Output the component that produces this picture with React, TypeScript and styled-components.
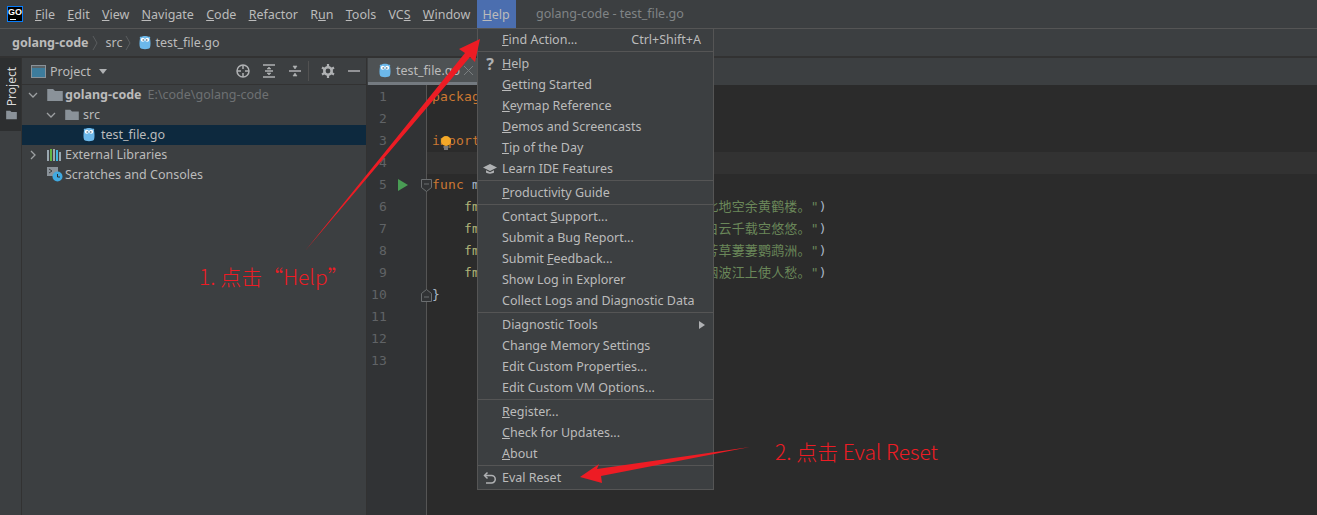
import React from "react";
import styled, { createGlobalStyle } from "styled-components";

const UI_FONT = `"Noto Sans", "Noto Sans CJK SC", sans-serif`;
const MONO_FONT = `"DejaVu Sans Mono", "Noto Sans CJK SC", monospace`;

const GlobalStyle = createGlobalStyle`
  html, body {
    margin: 0;
    padding: 0;
    background: #3c3f41;
  }
  * {
    box-sizing: border-box;
  }
`;

const Page = styled.div`
  position: relative;
  width: 1317px;
  height: 515px;
  overflow: hidden;
  display: flex;
  flex-direction: column;
  background: #3c3f41;
  color: #bbbbbb;
  font-family: ${UI_FONT};
  font-size: 12.5px;
`;

const MenuBar = styled.div`
  height: 29px;
  flex: none;
  display: flex;
  align-items: stretch;
  padding-left: 7px;
  border-bottom: 1px solid #555555;
`;

const Logo = styled.div`
  width: 16px;
  height: 16px;
  margin: 6px 6px 0 0;
  flex: none;
  background: #000000;
  border: 1px solid #087cfa;
  color: #ffffff;
  font: bold 9px/10px "Liberation Sans", sans-serif;
  text-align: center;
  position: relative;
  &::after {
    content: "";
    position: absolute;
    left: 2px;
    bottom: 1px;
    width: 6px;
    height: 1px;
    background: #ffffff;
  }
`;

const MenuTitle = styled.div<{ $open?: boolean }>`
  height: 28px;
  padding: 0 6px;
  line-height: 29px;
  background: ${(p) => (p.$open ? "#4b6eaf" : "transparent")};
  margin-right: 0.25px;
`;

const WindowTitle = styled.div`
  margin-left: 20px;
  line-height: 27px;
  color: #808486;
`;

const Breadcrumb = styled.div`
  height: 29px;
  flex: none;
  display: flex;
  align-items: center;
  padding-left: 12px;
  border-bottom: 2px solid #323232;
`;

const CrumbStrong = styled.span`
  font-weight: bold;
`;

const CrumbArrow = styled.svg`
  width: 6px;
  height: 16px;
  margin: 0 8px 0 3px;
  fill: none;
  stroke: #5a5d5f;
`;

const CrumbIcon = styled.span`
  display: flex;
  margin-right: 4px;
`;

const Body = styled.div`
  flex: 1;
  display: flex;
  min-height: 0;
`;

const ToolStrip = styled.div`
  width: 22px;
  flex: none;
  border-right: 1px solid #323232;
`;

const ToolButton = styled.div`
  height: 73px;
  background: #2d2f30;
  display: flex;
  flex-direction: column;
  align-items: center;
  padding-top: 9px;
  gap: 4px;
  padding-left: 2px;
`;

const ToolLabel = styled.span`
  writing-mode: vertical-rl;
  transform: rotate(180deg);
  font-size: 12px;
  line-height: 14px;
  color: #d8d8d8;
`;

const ProjectPanel = styled.div`
  width: 345px;
  flex: none;
  border-right: 1px solid #323232;
`;

const PanelHeader = styled.div`
  height: 27px;
  display: flex;
  align-items: center;
  padding: 0 5px 0 9px;
  border-bottom: 1px solid #323232;
`;

const PanelTitle = styled.span`
  margin-left: 4px;
`;

const Dropdown = styled.span`
  margin-left: 8px;
  width: 0;
  height: 0;
  border-left: 4.5px solid transparent;
  border-right: 4.5px solid transparent;
  border-top: 5px solid #afb1b3;
`;

const PanelTools = styled.div`
  margin-left: auto;
  display: flex;
  align-items: center;
`;

const ToolIcon = styled.svg<{ $outline?: boolean }>`
  width: 14px;
  height: 14px;
  margin-left: 12px;
  fill: ${(p) => (p.$outline ? "none" : "#afb1b3")};
  stroke: #afb1b3;
  stroke-width: 1.5;
`;

const ToolDivider = styled.span`
  width: 1px;
  height: 20px;
  background: #515151;
  margin: 0 0 0 6px;
`;

const Tree = styled.div`
  display: flex;
  flex-direction: column;
`;

const TreeRow = styled.div<{ $depth: number; $selected?: boolean }>`
  height: 20px;
  display: flex;
  align-items: center;
  padding-left: ${(p) => 5 + p.$depth * 18}px;
  padding-bottom: 1px;
  background: ${(p) => (p.$selected ? "#0d293e" : "transparent")};
  white-space: nowrap;
`;

const ChevronSlot = styled.span`
  width: 12px;
  display: flex;
  justify-content: center;
  margin-right: 8px;
  flex: none;
`;

const IconSlot = styled.span`
  width: 18px;
  display: flex;
  flex: none;
`;

const TreeHint = styled.span`
  margin-left: 6px;
  color: #6e7173;
`;

const EditorPane = styled.div`
  flex: 1;
  display: flex;
  flex-direction: column;
  min-width: 0;
`;

const TabBar = styled.div`
  height: 27px;
  flex: none;
  display: flex;
  padding-left: 1px;
`;

const Tab = styled.div`
  width: 109px;
  display: flex;
  align-items: center;
  padding-left: 11px;
  background: #4e5254;
  border-bottom: 3px solid #747a80;
  gap: 5px;
  position: relative;
  padding-top: 1px;
  & > svg:first-child {
    flex: none;
  }
`;

const TabClose = styled.svg`
  position: absolute;
  right: 4px;
  top: 8px;
  width: 9px;
  height: 9px;
  stroke: #7a7e80;
  stroke-width: 1;
`;

const Editor = styled.div`
  flex: 1;
  display: flex;
  background: #2b2b2b;
  font-family: ${MONO_FONT};
  font-size: 13px;
  letter-spacing: 0.17px;
  line-height: 22px;
`;

const Gutter = styled.div`
  width: 60px;
  flex: none;
  background: #313335;
  border-right: 1px solid #555555;
  padding-top: 1px;
`;

const GutterRow = styled.div`
  position: relative;
  height: 22px;
  display: flex;
  align-items: center;
`;

const LineNumber = styled.span`
  width: 20px;
  text-align: right;
  color: #606366;
`;

const RunMark = styled.svg`
  margin-left: 11px;
  width: 10px;
  height: 12px;
  fill: #499c54;
`;

const FoldMark = styled.svg`
  position: absolute;
  right: -6px;
  top: 5px;
  width: 11px;
  height: 13px;
  fill: #313335;
  stroke: #6b6e70;
`;

const CodeArea = styled.div`
  flex: 1;
  position: relative;
  padding-top: 1px;
  min-width: 0;
`;

const CodeLine = styled.div<{ $current?: boolean }>`
  height: 22px;
  padding-left: 5px;
  white-space: pre;
  color: #a9b7c6;
  background: ${(p) => (p.$current ? "#323232" : "transparent")};
`;

const Keyword = styled.span`
  color: #cc7832;
`;

const Call = styled.span`
  color: #afb478;
`;

const StringText = styled.span`
  color: #6a8759;
`;

const Bulb = styled.svg`
  position: absolute;
  left: 12px;
  top: 50px;
  width: 14px;
  height: 16px;
`;

const ActionMenu = styled.div`
  position: absolute;
  left: 477px;
  top: 28px;
  width: 237px;
  height: 462px;
  padding-top: 1px;
  background: #3c3f41;
  border: 1px solid #555555;
`;

const MenuSection = styled.div`
  padding-top: 2px;
  border-bottom: 1px solid #555555;
  &:first-child {
    padding-top: 0;
  }
  &:last-child {
    border-bottom: none;
  }
`;

const MenuRow = styled.div`
  position: relative;
  height: 21px;
  display: flex;
  align-items: center;
  padding: 0 12px 2px 24px;
  color: #bbbbbb;
  white-space: nowrap;
`;

const MenuIcon = styled.span`
  position: absolute;
  left: 5px;
  top: 3px;
  width: 14px;
  height: 14px;
  display: flex;
  align-items: center;
  justify-content: center;
  color: #afb1b3;
  font-weight: bold;
  font-size: 16px;
`;

const Shortcut = styled.span`
  margin-left: auto;
`;

const SubArrow = styled.span`
  margin-left: auto;
  margin-right: -4px;
  width: 0;
  height: 0;
  border-top: 4px solid transparent;
  border-bottom: 4px solid transparent;
  border-left: 6px solid #afb1b3;
`;

const Arrows = styled.svg`
  position: absolute;
  left: 0;
  top: 0;
  width: 1317px;
  height: 515px;
  fill: #ed1c24;
  pointer-events: none;
`;

const Note = styled.div<{ $x: number; $y: number }>`
  position: absolute;
  left: ${(p) => p.$x}px;
  top: ${(p) => p.$y}px;
  color: #ed1c24;
  font-family: "Noto Sans CJK SC", "Noto Sans", sans-serif;
  font-size: 21px;
  font-weight: 300;
  line-height: 28px;
  white-space: pre;
`;

const Gopher = () => (
  <svg width="12" height="15" viewBox="0 0 12 15">
    <path d="M1 3.500A1.200 1.200 0 0 1 2.500 1.700C3.500.6 8.500.6 9.500 1.700A1.200 1.200 0 0 1 11 3.500c.7 3 .7 7 0 9-.5 2.300-9.500 2.300-10 0-.7-2-.7-6 0-9z" fill="#6cb8ea" />
    <circle cx="3.800" cy="4.800" r="2" fill="#ffffff" />
    <circle cx="8.200" cy="4.800" r="2" fill="#ffffff" />
    <circle cx="4.200" cy="5" r=".7" fill="#1f3f55" />
    <circle cx="7.800" cy="5" r=".7" fill="#1f3f55" />
  </svg>
);

const Folder = ({ size = 16 }: { size?: number }) => (
  <svg width={size} height={size * 0.85} viewBox="0 0 16 14">
    <path d="M0 1h6l2 2h8v11H0z" fill="#8a9299" />
  </svg>
);

const Chevron = ({ open }: { open?: boolean }) => (
  <svg width="10" height="10" viewBox="0 0 10 10" fill="none" stroke="#9da0a2" strokeWidth="1.300">
    <path d={open ? "M1 3l4 4 4-4" : "M3 1l4 4-4 4"} />
  </svg>
);

const Mnemonic = ({ label }: { label: string }) => {
  const at = label.indexOf("_");
  if (at < 0) return <span>{label}</span>;
  return (
    <span>
      {label.slice(0, at)}
      <u>{label[at + 1]}</u>
      {label.slice(at + 2)}
    </span>
  );
};

const menuBarItems = ["_File", "_Edit", "_View", "_Navigate", "_Code", "_Refactor", "R_un", "_Tools", "VC_S", "_Window"];

type MenuItem = {
  label: string;
  shortcut?: string;
  icon?: React.ReactNode;
  submenu?: boolean;
};

const CapIcon = () => (
  <svg width="14" height="12" viewBox="0 0 14 12" fill="#afb1b3">
    <path d="M7 1L0 4.500 7 8l7-3.500z" />
    <path d="M3 7.200V9.500c1.500 1.500 6.500 1.500 8 0V7.200L7 9.200z" />
  </svg>
);

const UndoIcon = () => (
  <svg width="14" height="14" viewBox="0 0 14 14" fill="none" stroke="#afb1b3" strokeWidth="1.500">
    <path d="M4.500 1.500L1.500 4.500l3 3" />
    <path d="M2 4.500h6.500a3.500 3.500 0 0 1 0 7.500H3" />
  </svg>
);

const menuSections: MenuItem[][] = [
  [{ label: "_Find Action...", shortcut: "Ctrl+Shift+A" }],
  [
    { label: "_Help", icon: "?" },
    { label: "_Getting Started" },
    { label: "_Keymap Reference" },
    { label: "_Demos and Screencasts" },
    { label: "_Tip of the Day" },
    { label: "Learn IDE Features", icon: <CapIcon /> },
  ],
  [{ label: "_Productivity Guide" }],
  [
    { label: "Contact _Support..." },
    { label: "Submit a Bug Report..." },
    { label: "Submit _Feedback..." },
    { label: "Show Log in Explorer" },
    { label: "Collect Logs and Diagnostic Data" },
  ],
  [
    { label: "Diagnostic Tools", submenu: true },
    { label: "Change Memory Settings" },
    { label: "Edit Custom Properties..." },
    { label: "Edit Custom VM Options..." },
  ],
  [{ label: "_Register..." }, { label: "_Check for Updates..." }, { label: "_About" }],
  [{ label: "Eval Reset", icon: <UndoIcon /> }],
];

const poem = [
  "昔人已乘黄鹤去，此地空余黄鹤楼。",
  "黄鹤一去不复返，白云千载空悠悠。",
  "晴川历历汉阳树，芳草萋萋鹦鹉洲。",
  "日暮乡关何处是，烟波江上使人愁。",
];

const App = () => {
  return (
    <Page>
      <GlobalStyle />
      <MenuBar>
        <Logo>GO</Logo>
        {menuBarItems.map((item) => (
          <MenuTitle key={item}>
            <Mnemonic label={item} />
          </MenuTitle>
        ))}
        <MenuTitle $open>
          <Mnemonic label="_Help" />
        </MenuTitle>
        <WindowTitle>golang-code - test_file.go</WindowTitle>
      </MenuBar>

      <Breadcrumb>
        <CrumbStrong>golang-code</CrumbStrong>
        <CrumbArrow viewBox="0 0 6 16">
          <path d="M1 1l4 7-4 7" />
        </CrumbArrow>
        <span>src</span>
        <CrumbArrow viewBox="0 0 6 16">
          <path d="M1 1l4 7-4 7" />
        </CrumbArrow>
        <CrumbIcon>
          <Gopher />
        </CrumbIcon>
        <span>test_file.go</span>
      </Breadcrumb>

      <Body>
        <ToolStrip>
          <ToolButton>
            <ToolLabel>Project</ToolLabel>
            <Folder size={11} />
          </ToolButton>
        </ToolStrip>

        <ProjectPanel>
          <PanelHeader>
            <svg width="15" height="13" viewBox="0 0 15 13">
              <rect x=".5" y=".5" width="14" height="12" fill="#3d7c9c" stroke="#8a9299" />
              <rect x="1" y="1" width="13" height="2" fill="#5a6266" />
            </svg>
            <PanelTitle>Project</PanelTitle>
            <Dropdown />
            <PanelTools>
              <ToolIcon viewBox="0 0 14 14" $outline>
                <circle cx="7" cy="7" r="6" />
                <path d="M7 1v4M7 9v4M1 7h4M9 7h4" />
              </ToolIcon>
              <ToolIcon viewBox="0 0 14 14">
                <path d="M1 1h12M1 13h12M3 7h8" />
                <path d="M7 3L5 5h4zM7 11L5 9h4z" strokeWidth="0.6" />
              </ToolIcon>
              <ToolIcon viewBox="0 0 14 14">
                <path d="M1 7h12" />
                <path d="M7 5L5 2h4zM7 9L5 12h4z" strokeWidth="0.6" />
              </ToolIcon>
              <ToolDivider />
              <ToolIcon viewBox="0 0 14 14" $outline>
                <circle cx="7" cy="7" r="3.700" strokeWidth="2.600" />
                <path d="M7 0v3M7 11v3M1 3.500l2.500 1.500M10.500 9l2.500 1.500M13 3.500L10.500 5M3.500 9L1 10.500" strokeWidth="2.200" />
              </ToolIcon>
              <ToolIcon viewBox="0 0 14 14">
                <path d="M1 7h12" />
              </ToolIcon>
            </PanelTools>
          </PanelHeader>
          <Tree>
            <TreeRow $depth={0}>
              <ChevronSlot>
                <Chevron open />
              </ChevronSlot>
              <IconSlot>
                <Folder />
              </IconSlot>
              <CrumbStrong>golang-code</CrumbStrong>
              <TreeHint>E:\code\golang-code</TreeHint>
            </TreeRow>
            <TreeRow $depth={1}>
              <ChevronSlot>
                <Chevron open />
              </ChevronSlot>
              <IconSlot>
                <Folder size={14} />
              </IconSlot>
              src
            </TreeRow>
            <TreeRow $depth={2} $selected>
              <ChevronSlot />
              <IconSlot>
                <Gopher />
              </IconSlot>
              test_file.go
            </TreeRow>
            <TreeRow $depth={0}>
              <ChevronSlot>
                <Chevron />
              </ChevronSlot>
              <IconSlot>
                <svg width="15" height="12" viewBox="0 0 15 12">
                  <rect x="0" y="1" width="2" height="11" fill="#9aa7b0" />
                  <rect x="3" y="0" width="2" height="12" fill="#62b543" />
                  <rect x="6" y="0" width="2" height="12" fill="#9aa7b0" />
                  <rect x="9" y="1" width="2" height="11" fill="#40b6e0" />
                  <rect x="12" y="3" width="2" height="9" fill="#9aa7b0" />
                </svg>
              </IconSlot>
              External Libraries
            </TreeRow>
            <TreeRow $depth={0}>
              <ChevronSlot />
              <IconSlot>
                <svg width="16" height="15" viewBox="0 0 16 15">
                  <rect x="0" y="0" width="11" height="9" fill="#8a9299" />
                  <path d="M2 2l3 2-3 2" fill="none" stroke="#3c3f41" />
                  <circle cx="10.500" cy="9.500" r="5" fill="#40a9e0" />
                  <path d="M10.500 7v3h2.500" fill="none" stroke="#2b2b2b" />
                </svg>
              </IconSlot>
              Scratches and Consoles
            </TreeRow>
          </Tree>
        </ProjectPanel>

        <EditorPane>
          <TabBar>
            <Tab>
              <Gopher />
              test_file.go
              <TabClose viewBox="0 0 9 9">
                <path d="M0 0l9 9M9 0L0 9" />
              </TabClose>
            </Tab>
          </TabBar>
          <Editor>
            <Gutter>
              {Array.from({ length: 13 }, (_, i) => i + 1).map((n) => (
                <GutterRow key={n}>
                  <LineNumber>{n}</LineNumber>
                  {n === 5 && (
                    <RunMark viewBox="0 0 10 12">
                      <path d="M0 0l10 6-10 6z" />
                    </RunMark>
                  )}
                  {n === 5 && (
                    <FoldMark viewBox="0 0 11 13">
                      <path d="M.5.5h10v8l-5 4-5-4zM3 5h5" />
                    </FoldMark>
                  )}
                  {n === 10 && (
                    <FoldMark viewBox="0 0 11 13">
                      <path d="M.5 12.500h10v-8l-5-4-5 4zM3 8h5" />
                    </FoldMark>
                  )}
                </GutterRow>
              ))}
            </Gutter>
            <CodeArea>
              <CodeLine>
                <Keyword>package</Keyword> main
              </CodeLine>
              <CodeLine />
              <CodeLine>
                <Keyword>import</Keyword> <StringText>"fmt"</StringText>
              </CodeLine>
              <CodeLine $current />
              <CodeLine>
                <Keyword>func</Keyword> main() {"{"}
              </CodeLine>
              {poem.map((text) => (
                <CodeLine key={text}>
                  {"    "}
                  <Call>fmt</Call>.<Call>Println</Call>(<StringText>{`"    ${text}"`}</StringText>)
                </CodeLine>
              ))}
              <CodeLine>{"}"}</CodeLine>
              <Bulb viewBox="0 0 14 16">
                <circle cx="7" cy="6" r="5" fill="#f4a928" />
                <path d="M4.500 12h5M5 14h4" stroke="#c8c8c8" strokeWidth="1.200" />
              </Bulb>
            </CodeArea>
          </Editor>
        </EditorPane>
      </Body>

      <ActionMenu>
        {menuSections.map((section, i) => (
          <MenuSection key={i}>
            {section.map((item) => (
              <MenuRow key={item.label}>
                {item.icon && <MenuIcon>{item.icon}</MenuIcon>}
                <Mnemonic label={item.label} />
                {item.shortcut && <Shortcut>{item.shortcut}</Shortcut>}
                {item.submenu && <SubArrow />}
              </MenuRow>
            ))}
          </MenuSection>
        ))}
      </ActionMenu>

      <Arrows viewBox="0 0 1317 515">
        <polygon points="480,39 459,49 465,53 305,251 470,57 475,62" />
        <polygon points="580,477 599,464 597,469 750,447 601,476 602,483" />
      </Arrows>
      <Note $x={199} $y={262}>1. 点击“Help”</Note>
      <Note $x={775} $y={437}>2. 点击 Eval Reset</Note>
    </Page>
  );
};

export default App;
